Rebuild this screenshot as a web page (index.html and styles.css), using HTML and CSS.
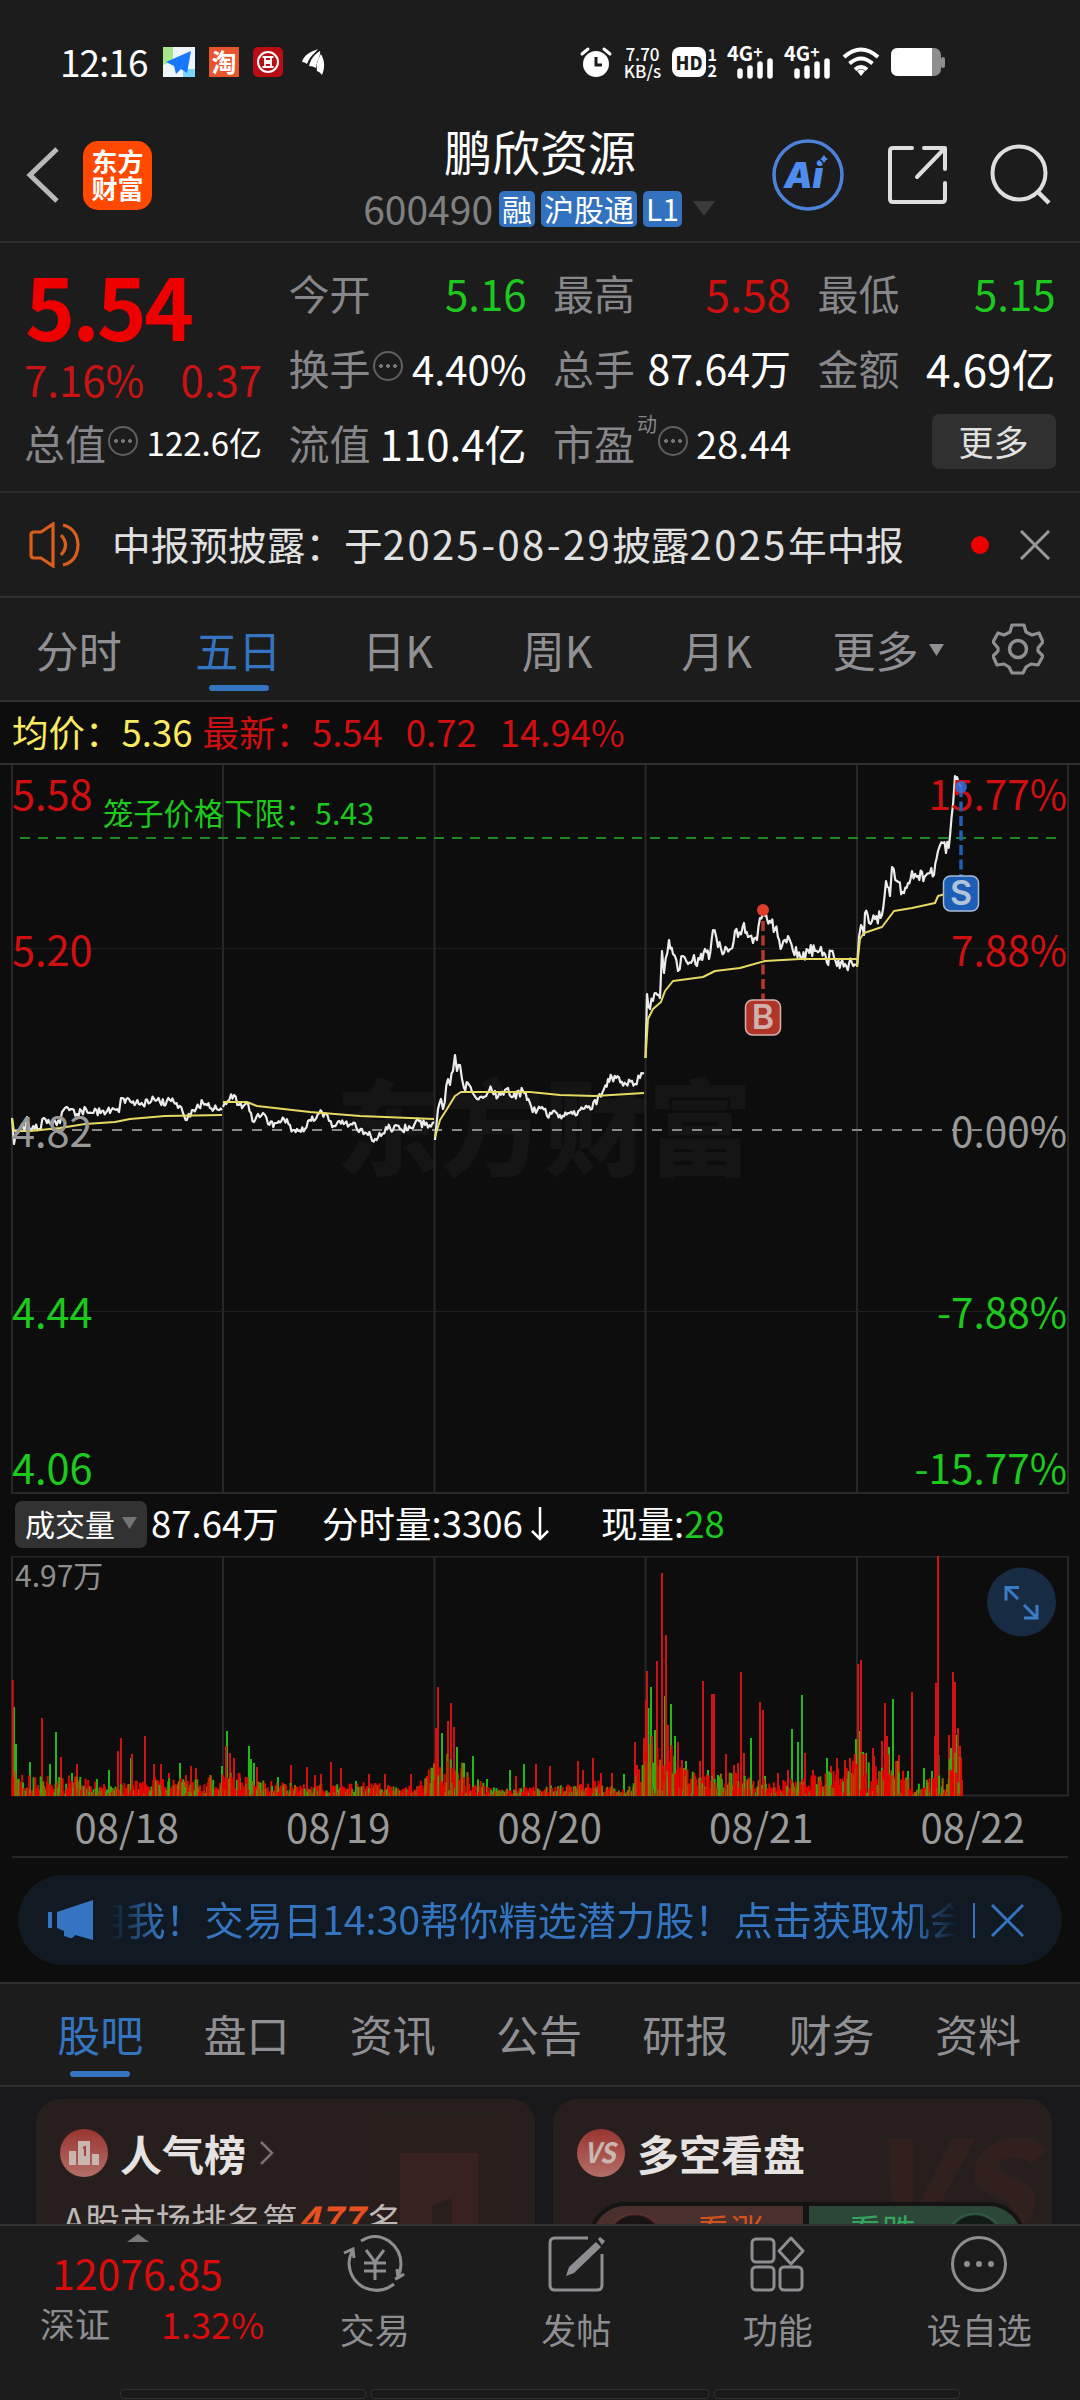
FILE: index.html
```html
<!DOCTYPE html>
<html lang="zh-CN">
<head>
    <meta charset="UTF-8">
    <meta name="viewport" content="width=device-width, initial-scale=1.0">
    <title>鹏欣资源 600490</title>
    <link rel="stylesheet" href="styles.css">
</head>
<body>

    <div class="status-bar">
        <span class="clock">12:16</span>
        <svg class="app-ico" width="32" height="30" viewBox="0 0 32 30">
            <rect width="32" height="30" fill="#eef6fb"/>
            <path d="M0 0h10v14L0 18z" fill="#a9e58b"/>
            <path d="M20 22h12v8H20z" fill="#7bd5fb"/>
            <path d="M28 4L3 15l8 4 2 8 5-5 6 4z" fill="#1677ff"/>
        </svg>
        <span class="app-ico taobao">淘</span>
        <svg class="app-ico" width="30" height="30" viewBox="0 0 30 30">
            <rect width="30" height="30" rx="5" fill="#b80d14"/>
            <circle cx="15" cy="15" r="10" fill="none" stroke="#fff" stroke-width="2"/>
            <path d="M9.500 10h11M9.500 20h11M12 10v4h6v-4M12 20v-4h6v4M15 13v4" fill="none" stroke="#fff" stroke-width="1.800"/>
        </svg>
        <svg class="app-ico wing" width="26" height="28" viewBox="0 0 26 28">
            <path d="M1 14C3 7 9 4 17 1 14 5 9 8 6 16q-2-2-5-2z" fill="#fff"/>
            <path d="M8 18C10 10 14 6 19 3c1 5-3 8-4 17q-3-2-7-2z" fill="#fff"/>
            <path d="M16 23c-1-7 1-12 4-17 4 7 4 14 1 21q-2-3-5-4z" fill="#fff"/>
        </svg>

        <div class="status-right">
            <svg width="32" height="32" viewBox="0 0 32 32">
                <circle cx="16" cy="18" r="13" fill="#fff"/>
                <path d="M2 8l6-5M30 8l-6-5" stroke="#fff" stroke-width="3" stroke-linecap="round"/>
                <path d="M16 11v8h6" fill="none" stroke="#1c1c1c" stroke-width="3"/>
            </svg>
            <span class="net-speed">7.70<br>KB/s</span>
            <span class="hd"><b>HD</b><i>1<br>2</i></span>
            <svg width="46" height="32" viewBox="0 0 46 32">
                <text class="sig" x="-1" y="15">4G<tspan dy="-3" font-size="16">+</tspan></text>
                <path d="M12 30v-5M22 30v-8M32 30V18M42 30V15" stroke="#fff" stroke-width="5.500" stroke-linecap="round"/>
            </svg>
            <svg width="46" height="32" viewBox="0 0 46 32">
                <text class="sig" x="-1" y="15">4G<tspan dy="-3" font-size="16">+</tspan></text>
                <path d="M12 30v-5M22 30v-8M32 30V18M42 30V15" stroke="#fff" stroke-width="5.500" stroke-linecap="round"/>
            </svg>
            <svg width="38" height="30" viewBox="0 0 38 30">
                <path d="M2 10q17-15 34 0M7.500 16.500q11.500-10 23 0M13 22.500q6-5 12 0" fill="none" stroke="#fff" stroke-width="4"/>
                <path d="M19 29l-4-5q4-3 8 0z" fill="#fff"/>
            </svg>
            <svg width="54" height="28" viewBox="0 0 54 28">
                <rect width="50" height="28" rx="7" fill="#8e8e8e"/>
                <path d="M7 0h34v28H7q-7 0-7-7V7q0-7 7-7z" fill="#fff"/>
                <rect x="50" y="9" width="4" height="11" rx="2" fill="#8e8e8e"/>
            </svg>
        </div>
    </div>

    <header>
        <svg class="back" width="36" height="58" viewBox="0 0 36 58">
            <path d="M31 3L4 29l27 26" fill="none" stroke="#b9b9b9" stroke-width="5"/>
        </svg>
        <div class="logo">东方<br>财富</div>
        <div class="title">
            <h1>鹏欣资源</h1>
            <div class="code">
                <span>600490</span>
                <em>融</em><em>沪股通</em><em>L1</em>
                <svg width="22" height="15" viewBox="0 0 22 15"><path d="M0 0h22L11 15z" fill="#3a3a3a"/></svg>
            </div>
        </div>
        <div class="actions">
            <svg width="74" height="74" viewBox="0 0 74 74">
                <circle cx="37" cy="37" r="34" fill="none" stroke="#4c82dc" stroke-width="3.500"/>
                <text class="ai" x="13" y="50">Ai</text>
                <path d="M53 14q1 6 6 7-5 1-6 7-1-6-6-7 5-1 6-7z" fill="#4f8cf0" stroke="#1c1c1c" stroke-width="1.500"/>
            </svg>
            <svg width="60" height="60" viewBox="0 0 60 60">
                <path d="M24 3H5q-3 0-3 3v48q0 3 3 3h49q3 0 3-3V38M36 3h21v21M56 4L29 32" fill="none" stroke="#dedede" stroke-width="4" stroke-linecap="round" stroke-linejoin="round"/>
            </svg>
            <svg width="62" height="62" viewBox="0 0 62 62">
                <circle cx="29" cy="29" r="26.500" fill="none" stroke="#dedede" stroke-width="4"/>
                <path d="M48 48l11 11" stroke="#dedede" stroke-width="4.500"/>
            </svg>
        </div>
    </header>

    <section class="quote">
        <div class="price">
            <strong>5.54</strong>
            <p><span>7.16%</span><span>0.37</span></p>
        </div>
        <div class="cell"><label>今开</label><b class="down">5.16</b></div>
        <div class="cell"><label>最高</label><b class="up s44">5.58</b></div>
        <div class="cell"><label>最低</label><b class="down">5.15</b></div>
        <div class="cell"><label>换手</label><i class="tip"></i><b class="s40">4.40%</b></div>
        <div class="cell"><label>总手</label><b class="s41">87.64万</b></div>
        <div class="cell"><label>金额</label><b class="s44">4.69亿</b></div>
        <div class="cell"><label>总值</label><i class="tip"></i><b class="s33">122.6亿</b></div>
        <div class="cell"><label>流值</label><b>110.4亿</b></div>
        <div class="cell"><label>市盈</label><sup>动</sup><i class="tip"></i><b class="s37">28.44</b></div>
        <div class="cell"><button class="more">更多</button></div>
    </section>

    <section class="notice">
        <svg width="54" height="46" viewBox="0 0 54 46">
            <path d="M2 13q0-3 3-3h7L24 2v42L12 36H5q-3 0-3-3zM32 13q9 10 0 20M34 3q9 2 13 10 4 10 0 20-4 8-13 10" fill="none" stroke="#d95f1b" stroke-width="3.200"/>
        </svg>
        <p>中报预披露：于<span>2025-08-29</span>披露<span>2025</span>年中报</p>
        <i class="dot"></i>
        <svg width="30" height="30" viewBox="0 0 30 30"><path d="M1 1l28 28M29 1L1 29" stroke="#999" stroke-width="3"/></svg>
    </section>

    <nav class="periods">
        <a>分时</a>
        <a class="active">五日</a>
        <a>日K</a>
        <a>周K</a>
        <a>月K</a>
        <a class="drop">更多<svg width="15" height="12" viewBox="0 0 15 12"><path d="M0 0h15L7.500 12z" fill="#909094"/></svg></a>
        <svg width="52" height="52" viewBox="0 0 52 52">
            <path d="M20 2h12l2 7 6 3 7-2 4 9-5 6 0 3 5 5-5 9-7-1-5 3-3 6H20l-3-6-5-3-7 1-4-9 5-5v-3l-5-6 5-9 6 2 6-3z" fill="none" stroke="#909094" stroke-width="3.200" stroke-linejoin="round"/>
            <circle cx="26" cy="26" r="8.500" fill="none" stroke="#909094" stroke-width="3.500"/>
        </svg>
    </nav>

    <div class="legend">
        <span class="avg">均价：5.36</span>
        <span>最新：5.54</span>
        <span>0.72</span>
        <span>14.94%</span>
    </div>

    <!-- 五日分时图 -->
    <svg class="chart" width="1080" height="729" viewBox="0 764 1080 729">
        <text class="watermark" x="544" y="1167">东方财富</text>
        <path class="grid" d="M12 764v729M223 764v729M434.500 764v729M645.500 764v729M857 764v729M1068 764v729M12 1492h1056"/>
        <path class="grid faint" d="M12 947.500h1056M12 1310.500h1056"/>
        <path d="M20 837h1038" stroke="#1f8a22" stroke-width="2" stroke-dasharray="10 8"/>
        <path d="M12 1129h1050" stroke="#8a8a8a" stroke-width="2" stroke-dasharray="10 10"/>
        <g id="lines"></g>
        <path d="M763 920v90" stroke="#b5392b" stroke-width="3.500" stroke-dasharray="10 4.500"/>
        <circle cx="763" cy="909" r="6" fill="#e03c2c"/>
        <g id="labels">
            <text class="up" x="12" y="809">5.58</text>
            <text class="up" x="12" y="965">5.20</text>
            <text x="12" y="1146">4.82</text>
            <text class="down" x="12" y="1327">4.44</text>
            <text class="down" x="12" y="1483">4.06</text>
            <text class="up end" x="1067" y="809">15.77%</text>
            <text class="up end" x="1067" y="965">7.88%</text>
            <text class="end" x="1067" y="1146">0.00%</text>
            <text class="down end" x="1067" y="1327">-7.88%</text>
            <text class="down end" x="1067" y="1483">-15.77%</text>
            <text class="down cage" x="103" y="824">笼子价格下限：5.43</text>
        </g>
        <path d="M961 786v90" stroke="#1f5fb5" stroke-width="3.500" stroke-dasharray="10 4.500"/>
        <circle cx="961" cy="786" r="6" fill="#3a6fe0" opacity=".85"/>
        <rect x="745.500" y="999" width="35" height="35" rx="7" fill="#b03427" stroke="#d2b4b0" stroke-width="1.500"/>
        <text class="mark" x="763" y="1028" fill="#cfb1ad">B</text>
        <rect x="943.500" y="875" width="35" height="35" rx="7" fill="#1c5db6" stroke="#a9bcd6" stroke-width="1.500"/>
        <text class="mark" x="961" y="904" fill="#b3c3da">S</text>
    </svg>

    <div class="vol-legend">
        <span class="chip">成交量<svg width="15" height="12" viewBox="0 0 15 12"><path d="M0 0h15L7.500 12z" fill="#747474"/></svg></span>
        <span class="v1">87.64万</span>
        <span class="v2">分时量:3306<svg width="20" height="34" viewBox="0 0 20 34"><path d="M10 0v32M2 24l8 8 8-8" fill="none" stroke="#fff" stroke-width="2.500"/></svg></span>
        <span>现量:<em>28</em></span>
    </div>

    <svg class="chart" width="1080" height="242" viewBox="0 1556 1080 242">
        <path class="grid" d="M12 1556.500h1056v239H12zM223 1556v240M434.500 1556v240M645.500 1556v240M857 1556v240"/>
        <text class="vmax" x="15" y="1587">4.97万</text>
        <g id="bars"></g>
        <circle cx="1021.500" cy="1602" r="34.500" fill="#172b42"/>
        <path d="M1019 1587.500h-13v13M1007 1588l11 11M1024 1618h13v-13M1036 1617l-12-12" fill="none" stroke="#3b7cc6" stroke-width="3"/>
    </svg>

    <div class="dates">
        <span>08/18</span><span>08/19</span><span>08/20</span><span>08/21</span><span>08/22</span>
    </div>

    <div class="banner">
        <svg width="46" height="40" viewBox="0 0 46 40">
            <path d="M0 12h4v16H0zM9 12L45 0v40l-18-5q-2 4-5 3l-6-2v-5l-7-3z" fill="#3474c0"/>
        </svg>
        <p>用我！交易日14:30帮你精选潜力股！点击获取机会</p>
        <i></i>
        <svg width="33" height="33" viewBox="0 0 33 33"><path d="M1 1l31 31M32 1L1 32" stroke="#3474c0" stroke-width="3"/></svg>
    </div>

    <nav class="sections">
        <a class="active">股吧</a><a>盘口</a><a>资讯</a><a>公告</a><a>研报</a><a>财务</a><a>资料</a>
    </nav>

    <main>
        <div class="card">
            <svg class="card-bg" width="499" height="125" viewBox="0 0 499 125">
                <path d="M298 0h201v125H242V76h28V38h28z" fill="#271e1e"/>
                <path d="M335 17h136v108H335z" fill="#2a1e1d"/>
                <path d="M364 54h78v71h-26V99l-20 8v18h-32z" fill="#38221f"/>
            </svg>
            <h2>
                <svg width="48" height="48" viewBox="0 0 48 48">
                    <defs><linearGradient id="g" x2="0" y2="1"><stop stop-color="#9b3431"/><stop offset="1" stop-color="#b36f68"/></linearGradient></defs>
                    <circle cx="24" cy="24" r="24" fill="url(#g)"/>
                    <path d="M9 22h7v14H9zM18 12h12v24H18zM32 25h7v11h-7z" fill="#c9b6b3"/>
                    <path d="M23 19l2-1v9" fill="none" stroke="#9b4640" stroke-width="2"/>
                </svg>
                人气榜
                <svg class="chev" width="14" height="24" viewBox="0 0 14 24"><path d="M1 1l11 11L1 23" fill="none" stroke="#77706f" stroke-width="2.500"/></svg>
            </h2>
            <p>A股市场排名第<b>477</b>名</p>
        </div>
        <div class="card">
            <svg class="card-bg" width="499" height="125" viewBox="0 0 499 125">
                <path d="M260 0h239v125H275z" fill="#271e1e"/>
                <text class="vs-bg" x="312" y="138">VS</text>
            </svg>
            <h2>
                <svg width="48" height="48" viewBox="0 0 48 48">
                    <circle cx="24" cy="24" r="24" fill="url(#g)"/>
                    <text class="vs" x="23" y="34" textLength="31" lengthAdjust="spacingAndGlyphs">VS</text>
                </svg>
                多空看盘
            </h2>
            <div class="vote">
                <span class="bull">看涨</span>
                <span class="bear">看跌</span>
            </div>
        </div>
    </main>

    <footer>
        <div class="index">
            <svg width="22" height="8" viewBox="0 0 22 8"><path d="M0 8L11 0l11 8z" fill="#77777b"/></svg>
            <strong>12076.85</strong>
            <p>深证<span>1.32%</span></p>
        </div>
        <a>
            <svg width="66" height="60" viewBox="0 0 66 60">
                <path d="M19 7Q33-2 47 7q12 9 12 23 0 7-3 13M52 50Q38 61 21 53 8 45 7 30q0-7 4-14M2 19l9-4 1 9M53 45l3-1 6-4M55 35l1 9" fill="none" stroke="#8e8e92" stroke-width="3"/>
                <path d="M24 16l9 12 9-12M22 29h22M22 37h22M33 28v18" fill="none" stroke="#8e8e92" stroke-width="3"/>
            </svg>
            交易
        </a>
        <a>
            <svg width="58" height="60" viewBox="0 0 58 60">
                <path d="M41 4H8Q3 4 3 9v42q0 5 5 5h42q5 0 5-5V20" fill="none" stroke="#8e8e92" stroke-width="3"/>
                <path d="M49 8l5 5-27 26-8 3 3-9zM51 5l2-2 5 4-3 4z" fill="#8e8e92"/>
            </svg>
            发帖
        </a>
        <a>
            <svg width="58" height="60" viewBox="0 0 58 60">
                <g fill="none" stroke="#8e8e92" stroke-width="3">
                    <rect x="3" y="5" width="22" height="23" rx="4"/>
                    <rect x="3" y="33" width="22" height="23" rx="4"/>
                    <rect x="31" y="33" width="22" height="23" rx="4"/>
                    <path d="M42 4l12 13-12 13-12-13z" stroke-linejoin="round"/>
                </g>
            </svg>
            功能
        </a>
        <a>
            <svg width="58" height="60" viewBox="0 0 58 60">
                <circle cx="29" cy="30" r="26.500" fill="none" stroke="#8e8e92" stroke-width="3"/>
                <g fill="#8e8e92"><circle cx="17" cy="30" r="3"/><circle cx="29" cy="30" r="3"/><circle cx="41" cy="30" r="3"/></g>
            </svg>
            设自选
        </a>
    </footer>
    <div class="home-bar"><i></i><i></i><i></i></div>

    <script src="chart.js"></script>
</body>
</html>
```
FILE: styles.css
```css
* {
    box-sizing: border-box;
}

body {
    margin: 0;
    width: 1080px;
    height: 2400px;
    overflow: hidden;
    display: flex;
    flex-direction: column;
    background: #1c1c1c;
    color: #fff;
    font-family: "Noto Sans CJK SC", "Noto Sans", sans-serif;
    line-height: 1;
}

body > * {
    flex: none;
}

h1, h2, p {
    margin: 0;
    font-weight: normal;
}

i, em {
    font-style: normal;
}

svg {
    display: block;
    flex: none;
}

.up {
    color: #d01010;
    fill: #d01010;
}

.down {
    color: #1cc91c;
    fill: #1cc91c;
}

/* 状态栏 */
.status-bar {
    height: 125px;
    padding: 0 135px 2px 60px;
    display: flex;
    align-items: center;
}

.clock {
    width: 103px;
    font-size: 37px;
    letter-spacing: -1px;
    white-space: nowrap;
}

.app-ico {
    margin-right: 14px;
}

.taobao {
    width: 30px;
    height: 30px;
    background: #e8552c;
    font-size: 25px;
    font-weight: bold;
    line-height: 29px;
    text-align: center;
}

.wing {
    margin-left: 4px;
}

.status-right {
    margin-left: auto;
    display: flex;
    align-items: center;
    gap: 11px;
}

.status-right svg {
    overflow: visible;
}

.net-speed {
    width: 38px;
    font-size: 17px;
    font-weight: 500;
    text-align: center;
}

.hd {
    display: flex;
    align-items: center;
    gap: 2px;
    font-size: 16px;
    font-weight: bold;
}

.hd b {
    padding: 6px 3px;
    border-radius: 8px;
    background: #fff;
    color: #1c1c1c;
    font-size: 18px;
}

.sig {
    font-size: 20px;
    font-weight: bold;
    fill: #fff;
}

/* 标题栏 */
header {
    height: 118px;
    padding: 0 28px 0 26px;
    border-bottom: 2px solid #2d2d2d;
    display: grid;
    grid-template-columns: 36px 21px 69px 1fr 283px;
    align-items: center;
}

.back {
    margin-top: -16px;
}

.logo {
    grid-column: 3;
    height: 69px;
    margin-top: -16px;
    padding-top: 6px;
    border-radius: 15px;
    background: #ff4800;
    font-size: 26px;
    font-weight: bold;
    line-height: 27px;
    text-align: center;
}

.title {
    margin-top: -12px;
    padding-right: 54px;
    display: flex;
    flex-direction: column;
    align-items: flex-end;
}

h1 {
    margin: 0 79px 15px 0;
    font-size: 48px;
}

.code {
    display: flex;
    align-items: center;
    gap: 6px;
    color: #808080;
    font-size: 39px;
    white-space: nowrap;
}

.code em {
    height: 36px;
    padding: 0 3px;
    border-radius: 5px;
    background: #3272be;
    color: #fff;
    font-size: 30px;
    line-height: 34px;
}

.code svg {
    margin-left: 5px;
}

.actions {
    display: flex;
    justify-content: space-between;
    align-items: center;
    margin: -16px 0 0 2px;
}

.ai {
    font-family: Inter, sans-serif;
    font-size: 36px;
    font-weight: 900;
    font-style: italic;
    fill: #4f8cf0;
}

/* 行情 */
.quote {
    height: 250px;
    padding: 12px 24px 0;
    border-bottom: 2px solid #2a2a2a;
    display: grid;
    grid-template-columns: repeat(4, 238px);
    grid-template-rows: repeat(3, 75px);
    column-gap: 26.500px;
}

.price {
    grid-row: span 2;
    color: #ee0000;
}

.price strong {
    display: block;
    margin: 6px 0 0 1px;
    font-size: 85px;
    letter-spacing: -3px;
}

.price p {
    display: flex;
    justify-content: space-between;
    margin-top: 12px;
    color: #c81414;
    font-size: 42px;
}

.cell {
    display: flex;
    align-items: center;
    white-space: nowrap;
}

.cell label {
    color: #87878b;
    font-size: 41px;
}

.cell b {
    margin-left: auto;
    font-size: 42px;
    font-weight: normal;
}

.cell .s33 { font-size: 33px; }
.cell .s37 { font-size: 38px; }
.cell .s40 { font-size: 40px; }
.cell .s41 { font-size: 41px; }
.cell .s44 { font-size: 44px; }

.cell sup {
    align-self: flex-start;
    margin: 9px -1px 0 2px;
    color: #87878b;
    font-size: 20px;
}

.tip {
    width: 30px;
    height: 30px;
    margin: -4px 0 0 2px;
    border: 2px solid #606060;
    border-radius: 50%;
    background:
        radial-gradient(circle at 6px 13px, #77777b 1.700px, transparent 2.200px),
        radial-gradient(circle at 13px 13px, #77777b 1.700px, transparent 2.200px),
        radial-gradient(circle at 20px 13px, #77777b 1.700px, transparent 2.200px);
    flex: none;
}

.more {
    margin-left: auto;
    width: 124px;
    height: 55px;
    padding: 0 0 3px;
    border: none;
    border-radius: 7px;
    background: #303030;
    color: #e0e0e0;
    font: 35px "Noto Sans CJK SC", sans-serif;
    line-height: 1;
    margin-top: -2px;
}

.notice {
    height: 105px;
    padding: 0 30px 0 29px;
    border-bottom: 2px solid #2f2f2f;
    display: flex;
    align-items: center;
}

.notice p {
    margin: -3px 0 0 29px;
    color: #e0e0e0;
    font-size: 38.700px;
    white-space: nowrap;
}

.notice p span {
    font-size: 40px;
    letter-spacing: 2.400px;
}

.dot {
    width: 18px;
    height: 18px;
    margin: 0 31px 0 auto;
    border-radius: 50%;
    background: #ee0000;
}

/* 周期切换 */
.periods {
    height: 104px;
    padding-right: 36px;
    border-bottom: 2px solid #303030;
    display: flex;
    align-items: center;
    color: #909094;
    font-size: 43px;
}

.periods a {
    width: 159.500px;
    text-align: center;
    padding: 1px 2px 0 0;
}

.periods > svg {
    margin-left: auto;
    margin-top: -1px;
}

.periods .drop {
    display: flex;
    align-items: center;
    gap: 10px;
    padding-left: 35px;
    white-space: nowrap;
}

.active {
    position: relative;
    color: #3474c0;
}

.active::after {
    content: "";
    position: absolute;
    left: 50%;
    bottom: -20px;
    width: 60px;
    height: 6px;
    margin-left: -30px;
    border-radius: 3px;
    background: #3474c0;
}

.legend {
    height: 63px;
    padding: 0 12px;
    border-bottom: 2px solid #303030;
    background: #0d0d0d;
    display: flex;
    align-items: center;
    gap: 23px;
    color: #d01010;
    font-size: 36.500px;
    white-space: pre;
}

.legend .avg {
    margin-right: -13px;
    color: #fbe964;
}

/* 图表 */
.chart {
    background: #0d0d0d;
}

.grid {
    fill: none;
    stroke: #272727;
    stroke-width: 2;
}

.faint {
    stroke: #1f1f1f;
    stroke-width: 1;
}

.watermark {
    font-size: 104px;
    font-weight: 900;
    text-anchor: middle;
    fill: #151515;
}

#labels text {
    font-size: 41.500px;
}

#labels text:not(.up):not(.down) {
    fill: #999;
}

#labels .end {
    font-size: 40.500px;
    text-anchor: end;
}

#labels .cage {
    font-size: 30.300px;
}

.mark {
    font-family: Inter, sans-serif;
    font-size: 34px;
    font-weight: 600;
    text-anchor: middle;
}

.line {
    fill: none;
    stroke: #ececec;
    stroke-width: 2.200;
    stroke-linejoin: round;
}

.line.avg {
    stroke: #e6da62;
    stroke-width: 2;
}

.vol-legend {
    height: 62px;
    padding: 0 0 3px 15px;
    background: #0d0d0d;
    display: flex;
    align-items: center;
    font-size: 36.500px;
    white-space: nowrap;
}

.chip {
    width: 132px;
    height: 47px;
    margin: 2px 4px 0 0;
    border-radius: 7px;
    background: #323232;
    display: flex;
    align-items: center;
    justify-content: space-between;
    padding: 0 10px 4px;
    font-size: 30px;
}

.v1 {
    width: 171px;
}

.v2 {
    width: 279px;
    display: flex;
    align-items: center;
    gap: 7px;
}

.vol-legend em {
    color: #1cc91c;
}

.vmax {
    font-size: 30px;
    fill: #8e8e8e;
}

.dates {
    height: 60px;
    padding: 0 0 5px 21px;
    background: #0d0d0d linear-gradient(#272727, #272727) 12px 100% / 1056px 2px no-repeat;
    display: flex;
    align-items: center;
    color: #999;
    font-size: 40px;
}

.dates span {
    width: 211.500px;
    text-align: center;
}

.banner {
    height: 90px;
    margin: 17px 18px;
    padding: 0 38px 0 30px;
    border-radius: 45px;
    background: #111a23;
    box-shadow: 0 0 0 60px #0d0d0d;
    clip-path: inset(-17px -18px);
    display: flex;
    align-items: center;
    color: #3474c0;
    font-size: 39.200px;
}

.banner p {
    width: 847px;
    margin: -5px 0 0 16px;
    line-height: 56px;
    overflow: hidden;
    text-indent: -23px;
    white-space: nowrap;
    -webkit-mask-image: linear-gradient(90deg, transparent, #000 50px, #000 800px, transparent);
    mask-image: linear-gradient(90deg, transparent, #000 50px, #000 800px, transparent);
}

.banner i {
    width: 2px;
    height: 35px;
    margin: 0 auto 0 16px;
    background: #3474c0;
}

.sections {
    height: 105px;
    padding: 0 28px 0 27px;
    border-top: 2px solid #303030;
    border-bottom: 2px solid #303030;
    display: flex;
    align-items: center;
    color: #909094;
    font-size: 43px;
}

.sections a {
    width: 146.300px;
    padding-bottom: 2px;
    text-align: center;
}

/* 卡片区 */
main {
    height: 137px;
    padding: 12px 28px 0 36px;
    background: #18181a;
    display: flex;
    gap: 18px;
    overflow: hidden;
}

.card {
    position: relative;
    width: 499px;
    height: 220px;
    padding: 29px 24px;
    border-radius: 24px;
    background: #261f1e;
    overflow: hidden;
    flex: none;
}

.card-bg {
    position: absolute;
    left: 0;
    top: 0;
}

.card h2 {
    position: relative;
    height: 50px;
    display: flex;
    align-items: center;
    gap: 12px;
    color: #e6e2e1;
    font-size: 42px;
    font-weight: bold;
    line-height: 46px;
}

.chev {
    margin-left: 2px;
}

.card p {
    position: relative;
    margin: 22px 0 0 3px;
    color: #bdb8b6;
    font-size: 35.500px;
    white-space: nowrap;
}

.card p b {
    color: #e5501f;
    font-size: 37px;
    font-style: italic;
    margin-right: 4px;
}

.vs {
    font-size: 28px;
    font-weight: bold;
    font-style: italic;
    text-anchor: middle;
    fill: #c9b6b3;
}

.vs-bg {
    font-size: 132px;
    font-weight: 900;
    font-style: italic;
    fill: #32201e;
}

.vote {
    position: relative;
    width: 436px;
    height: 72px;
    margin: 24px 0 0 12px;
    border: 4px solid #161313;
    border-radius: 36px;
    background: #161313;
    display: flex;
    gap: 6px;
    overflow: hidden;
    font-size: 34px;
}

.vote span {
    flex: 1;
    padding-top: 7px;
    text-align: center;
}

.bull {
    background: radial-gradient(circle at 42px 36px, #1a1313 26px, #5c322d 28px, #4a302d 30px);
    color: #d2531f;
    padding-left: 64px;
}

.bear {
    background: radial-gradient(circle at 166px 36px, #121a15 26px, #35604a 28px, #2c4638 30px);
    color: #36a45c;
    padding-right: 66px;
}

/* 底部导航 */
footer {
    height: 165px;
    border-top: 2px solid #333;
    display: flex;
    color: #8e8e92;
    font-size: 35px;
}

.index {
    width: 274px;
    padding: 8px 0 0 40px;
}

.index svg {
    margin: 0 0 10px 87px;
}

.index strong {
    display: block;
    margin-left: 12px;
    color: #dd0c0c;
    font-size: 41px;
    font-weight: normal;
}

.index p {
    display: flex;
    gap: 51px;
    margin-top: 12px;
}

.index span {
    color: #dd0c0c;
    font-size: 36px;
}

footer a {
    width: 201.500px;
    padding-top: 8px;
    text-align: center;
}

footer a svg {
    margin: 0 auto 17px;
}

.home-bar {
    height: 11px;
    display: flex;
    justify-content: center;
    gap: 5px;
}

.home-bar i {
    width: 246px;
    height: 10px;
    border: 1px solid #303030;
    border-radius: 4px;
    background: #191919;
}

.home-bar i:nth-child(2) {
    width: 338px;
}
```
FILE: chart.js
```js
const NS = 'http://www.w3.org/2000/svg';

// 固定种子，保证每次绘制一致
let seed = 20250822;
function rand() {
    seed = (seed * 1103515245 + 12345) % 2147483648;
    return seed / 2147483648;
}

const price = [
    [12,1117, 14,1143, 18,1132, 21,1125, 25,1128, 27,1116, 29,1126, 39,1128, 44,1117, 47,1122, 55,1120, 60,1122, 62,1111, 68,1107, 72,1108, 77,1113, 86,1108, 92,1112, 102,1110, 114,1108, 119,1111, 121,1097, 125,1102, 129,1098, 136,1102, 143,1104, 154,1098, 160,1101, 171,1100, 178,1107, 183,1112, 187,1119, 192,1109, 203,1102, 214,1108, 222,1109],
    [223,1106, 228,1100, 234,1094, 239,1104, 248,1102, 254,1121, 258,1113, 263,1112, 268,1123, 276,1122, 284,1118, 290,1124, 293,1129, 305,1128, 308,1120, 315,1119, 322,1111, 329,1120, 334,1125, 345,1122, 355,1122, 359,1131, 368,1134, 375,1138, 381,1135, 386,1126, 400,1128, 413,1127, 416,1120, 425,1124, 434,1121],
    [435,1139, 438,1108, 441,1098, 443,1108, 448,1078, 450,1084, 453,1070, 455,1054, 457,1070, 460,1064, 462,1078, 464,1087, 468,1082, 472,1091, 477,1098, 480,1096, 489,1090, 495,1090, 498,1096, 505,1089, 508,1087, 513,1096, 523,1090, 527,1099, 531,1105, 536,1112, 542,1106, 547,1115, 553,1110, 560,1114, 568,1112, 577,1114, 583,1108, 592,1108, 598,1096, 604,1088, 608,1078, 616,1077, 626,1083, 635,1083, 640,1077, 644,1072],
    [645.5,1057, 647,993, 650,1008, 656,992, 660,997, 662,950, 664,972, 669,939, 673,953, 678,970, 683,955, 688,963, 694,954, 697,965, 705,948, 709,958, 713,929, 718,946, 724,952, 731,948, 735,930, 738,936, 744,922, 748,936, 753,942, 757,939, 760,917, 763,910, 767,918, 775,928, 782,945, 788,935, 793,950, 802,958, 808,949, 815,950, 821,946, 827,962, 831,950, 837,965, 845,963, 856,964],
    [857,966, 859,936, 861,924, 864,934, 865,912, 869,922, 875,918, 882,914, 886,880, 890,895, 892,866, 897,880, 904,892, 908,882, 912,870, 918,875, 930,872, 934,874, 938,850, 943,842, 946,852, 950,835, 953,804, 955,775, 956,790, 957,776, 959,782, 961,786]
];

const average = [
    '12,1117 14,1130 30,1130 60,1127 85,1123 115,1121 130,1118 165,1115 222,1114',
    '223,1101 247,1101 257,1105 310,1111 360,1115 385,1116 434,1118',
    '435,1136 440,1119 447,1108 455,1095 461,1091 500,1091 530,1091 560,1094 595,1095 644,1092',
    '645.5,1057 648,1018 653,1008 661,1001 665,990 673,980 703,976 715,970 740,967 765,960 800,958 857,958',
    '857,966 860,938 864,932 882,926 894,910 912,907 935,902 938,895 945,893 952,891 961,874'
];

function polyline(points, cls) {
    const el = document.createElementNS(NS, 'polyline');
    el.setAttribute('points', points);
    el.setAttribute('class', cls);
    document.getElementById('lines').appendChild(el);
}

price.forEach(function (p, day) {
    const amp = [8, 8, 9, 13, 13][day];
    const out = [];
    for (let i = 0; i < p.length - 2; i += 2) {
        out.push(p[i] + ',' + p[i + 1]);
        const n = Math.floor((p[i + 2] - p[i]) / 1.3);
        for (let k = 1; k < n; k++) {
            const t = k / n;
            const y = p[i + 1] + (p[i + 3] - p[i + 1]) * t + (rand() - 0.5) * amp;
            out.push((p[i] + (p[i + 2] - p[i]) * t).toFixed(1) + ',' + y.toFixed(1));
        }
    }
    out.push(p[p.length - 2] + ',' + p[p.length - 1]);
    polyline(out.join(' '), 'line');
});
average.forEach(p => polyline(p, 'line avg'));

// 成交量：x, 高度
const redBars = [12.7,116, 42,78, 61,39, 77,32, 118,45, 121,58, 132,42, 145,60, 154,32, 161,32, 169,23, 186,21, 191,30, 196,28, 211,20, 226,50, 230,43, 234,38, 257,29, 291,31, 307,29, 315,21, 321,22, 331,34, 341,28, 369,22, 385,22, 411,22, 427,20, 436,68, 438,109, 448,75, 451,93, 454,69, 516,20, 536,32, 550,30, 578,35, 583,26, 593,38, 601,23, 612,23, 635,54, 637,31, 644,58, 646,96, 647,125, 652,60, 657,135, 662,223, 666,161, 668,71, 678,54, 682,36, 700,35, 703,115, 712,102, 714,102, 726,42, 734,31, 738,33, 741,124, 744,43, 760,94, 763,86, 778,23, 788,26, 805,43, 813,26, 831,30, 837,38, 845,36, 850,38, 858,132, 861,136, 873,48, 874,40, 882,55, 885,93, 887,60, 899,41, 912,104, 935,60, 936,113, 938,240, 949,61, 953,124, 955,114, 958,68, 960,50, 962,16];
const greenBars = [14,89, 16,52, 30,34, 50,32, 56,64, 72,23, 97,17, 109,26, 131,38, 180,33, 222,30, 227,65, 240,18, 249,50, 251,37, 254,33, 278,19, 356,15, 442,63, 457,49, 464,33, 473,40, 487,17, 510,26, 524,32, 624,22, 648.5,88, 651,109, 655,66, 665,100, 671,92, 675,60, 686,35, 693,23, 708,26, 718,21, 751,58, 765,20, 792,67, 798,54, 802,101, 827,38, 856,57, 860,65, 863,44, 866,43, 889,49, 893,97, 908,25, 924,28, 932,25, 938.5,41, 951,48, 956,61, 961,32];

// 底部小柱的包络线：x, 最大高度
const envelope = [12,30, 20,20, 40,22, 80,18, 110,8, 160,18, 200,16, 228,28, 250,16, 300,10, 345,10, 380,14, 400,5, 425,16, 437,45, 460,40, 480,14, 500,5, 560,10, 600,14, 625,4, 634,14, 646,50, 678,50, 690,25, 710,24, 750,20, 780,14, 820,20, 850,32, 860,50, 880,26, 890,46, 910,14, 932,16, 945,22, 955,50, 962,36];

function envelopeAt(x) {
    for (let i = 0; i < envelope.length - 2; i += 2) {
        if (x <= envelope[i + 2]) {
            const t = (x - envelope[i]) / (envelope[i + 2] - envelope[i]);
            return envelope[i + 1] + (envelope[i + 3] - envelope[i + 1]) * t;
        }
    }
    return 0;
}

function bar(x, h, color) {
    const el = document.createElementNS(NS, 'rect');
    el.setAttribute('x', (x - 1).toFixed(2));
    el.setAttribute('y', (1796 - h).toFixed(1));
    el.setAttribute('width', 2);
    el.setAttribute('height', h.toFixed(1));
    el.setAttribute('fill', color);
    document.getElementById('bars').appendChild(el);
}

for (let i = 0; i < greenBars.length; i += 2) bar(greenBars[i], greenBars[i + 1], '#22b81a');
for (let i = 0; i < redBars.length; i += 2) bar(redBars[i], redBars[i + 1], '#d01212');
for (let x = 12.5; x < 962; x += 0.88) {
    const h = 2 + envelopeAt(x) * Math.pow(rand(), 1.2);
    const r = rand();
    bar(x, h, r < 0.6 ? '#e60500' : r < 0.82 ? '#8f6a00' : '#2fae10');
}
```
